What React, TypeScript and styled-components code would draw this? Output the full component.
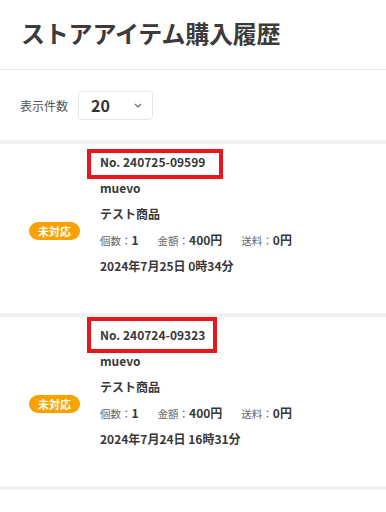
import styled, { createGlobalStyle } from "styled-components";

type Order = {
  no: string;
  shop: string;
  item: string;
  count: number;
  price: string;
  shipping: string;
  date: string;
  mark: { top: number; bottom: number; left: number; right: number };
};

const orders: Order[] = [
  {
    no: "No. 240725-09599",
    shop: "muevo",
    item: "テスト商品",
    count: 1,
    price: "400円",
    shipping: "0円",
    date: "2024年7月25日 0時34分",
    mark: { top: 0, bottom: -4, left: -13, right: -18 },
  },
  {
    no: "No. 240724-09323",
    shop: "muevo",
    item: "テスト商品",
    count: 1,
    price: "400円",
    shipping: "0円",
    date: "2024年7月24日 16時31分",
    mark: { top: -5, bottom: -5, left: -13, right: -12 },
  },
];

export default function App() {
  return (
    <>
      <GlobalStyle />
      <Page>
        <Header>
          <Title>ストアアイテム購入履歴</Title>
        </Header>
        <Toolbar>
          <Label>表示件数</Label>
          <Select>
            <span>20</span>
            <svg width="8" height="5" viewBox="0 0 8 5">
              <path d="M1 1l3 3 3-3" fill="none" stroke="#666" strokeWidth="1.2" />
            </svg>
          </Select>
        </Toolbar>
        <List>
          {orders.map((o) => (
            <Card key={o.no}>
              <BadgeCol>
                <Badge>未対応</Badge>
              </BadgeCol>
              <Body>
                <Row>
                  <OrderNo $mark={o.mark}>{o.no}</OrderNo>
                </Row>
                <Row>{o.shop}</Row>
                <Row>{o.item}</Row>
                <Row>
                  <Stat>
                    <small>個数：</small>
                    {o.count}
                  </Stat>
                  <Stat>
                    <small>金額：</small>
                    {o.price}
                  </Stat>
                  <Stat>
                    <small>送料：</small>
                    {o.shipping}
                  </Stat>
                </Row>
                <Row>{o.date}</Row>
              </Body>
            </Card>
          ))}
        </List>
      </Page>
    </>
  );
}

const GlobalStyle = createGlobalStyle`
  body {
    margin: 0;
    background: #fff;
    font-family: "Noto Sans CJK JP", "Noto Sans", sans-serif;
    color: #333;
  }
`;

const Page = styled.div`
  width: 386px;
`;

const Header = styled.header`
  height: 69px;
  padding-left: 21px;
  display: flex;
  align-items: center;
  border-bottom: 1px solid #ebebeb;
`;

const Title = styled.h1`
  margin: 0 0 4px;
  font-size: 24px;
  font-weight: 700;
  color: #3b3b3b;
  letter-spacing: -0.2px;
`;

const Toolbar = styled.div`
  height: 70px;
  padding-left: 20px;
  display: flex;
  align-items: center;
  gap: 10px;
`;

const Label = styled.span`
  font-size: 12px;
  color: #555;
`;

const Select = styled.div`
  width: 75px;
  height: 29px;
  box-sizing: border-box;
  border: 1px solid #e6e6e6;
  border-radius: 4px;
  display: flex;
  align-items: center;
  justify-content: space-between;
  padding: 0 10px 0 12px;
  font-size: 16px;
  font-weight: 700;
  color: #333;
`;

const List = styled.div`
  border-bottom: 4px solid #f3f1ef;
`;

const Card = styled.div`
  display: flex;
  align-items: center;
  border-top: 4px solid #f3f1ef;
`;

const BadgeCol = styled.div`
  width: 100px;
  padding-left: 29px;
  box-sizing: border-box;
`;

const Badge = styled.span`
  display: inline-flex;
  align-items: center;
  justify-content: center;
  width: 51px;
  height: 18px;
  border-radius: 9px;
  background: #f9a100;
  color: #fff;
  font-size: 11px;
  font-weight: 700;
`;

const Body = styled.div`
  padding: 5px 0 34px;
  display: flex;
  flex-direction: column;
`;

const Row = styled.div`
  height: 26px;
  line-height: 26px;
  font-size: 12px;
  font-weight: 700;
  color: #383838;
  display: flex;
  align-items: center;
  gap: 19px;
`;

const OrderNo = styled.span<{ $mark: Order["mark"] }>`
  position: relative;

  &::after {
    content: "";
    position: absolute;
    top: ${(p) => p.$mark.top}px;
    bottom: ${(p) => p.$mark.bottom}px;
    left: ${(p) => p.$mark.left}px;
    right: ${(p) => p.$mark.right}px;
    border: 4px solid #e8151d;
  }
`;

const Stat = styled.span`
  small {
    font-size: 10.5px;
    font-weight: 400;
    color: #666;
  }
`;
